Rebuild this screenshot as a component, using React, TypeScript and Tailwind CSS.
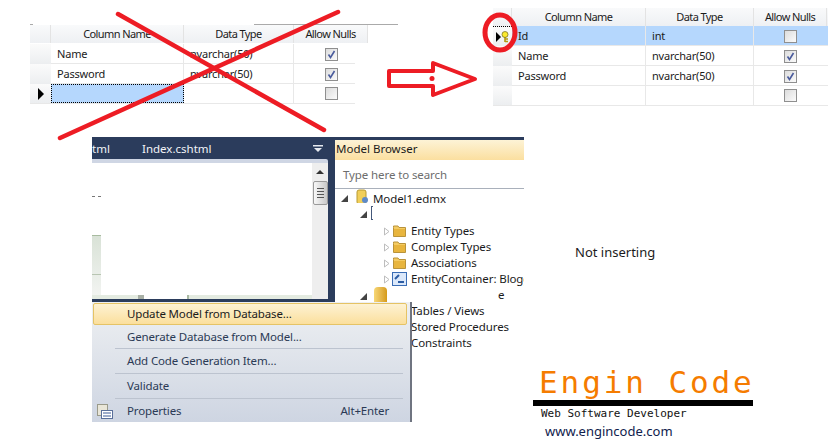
const tableFont = { fontFamily: '"Noto Sans", sans-serif' };

function Check({ on }: { on: boolean }) {
  return (
    <span className="flex h-[13px] w-[13px] items-center justify-center border border-[#8f8f8f] bg-gradient-to-br from-[#dcdcdc] to-[#fbfbfb]">
      {on && (
        <svg width="9" height="9" viewBox="0 0 9 9">
          <path d="M1.5 4.5 L3.5 7.5 L7.5 1" fill="none" stroke="#4a5b9c" strokeWidth="1.6" />
        </svg>
      )}
    </span>
  );
}

function Header({ cols }: { cols: string }) {
  return (
    <div className={`grid h-[18px] ${cols} bg-gradient-to-b from-[#f9fafb] to-[#eef0f3] text-center text-[11px] leading-[17px] tracking-[-0.6px] text-[#1b1b1b]`}>
      <div className="border-r border-[#e3e3e3]" />
      <div className="border-r border-[#e3e3e3]">Column Name</div>
      <div className="border-r border-[#e3e3e3]">Data Type</div>
      <div className="border-r border-[#e3e3e3]">Allow Nulls</div>
    </div>
  );
}

function Row({ cols, name, type, on, marker, selected, focusName }: { cols: string; name: string; type: string; on: boolean; marker?: React.ReactNode; selected?: boolean; focusName?: boolean }) {
  return (
    <div className={`grid h-5 ${cols} border-b border-[#e8e8e8] text-[11px] leading-[20px] tracking-[-0.2px] text-[#1b1b1b] ${selected ? 'bg-[#b5d7fd]' : ''}`}>
      <div className={`flex items-center justify-center bg-gradient-to-b from-[#fbfbfb] to-[#eceef0] ${selected ? 'border-t border-dotted border-black' : ''}`}>{marker}</div>
      <div className={`border-r border-[#e8e8e8] pl-[6px] ${focusName ? 'border border-dotted border-black bg-[#b5d7fd]' : ''}`}>{name}</div>
      <div className="border-r border-[#e8e8e8] pl-[6px]">{type}</div>
      <div className="flex items-center justify-center"><Check on={on} /></div>
    </div>
  );
}

function Folder({ label }: { label: string }) {
  return (
    <div className="flex h-4 items-center">
      <svg width="8" height="9" viewBox="0 0 8 9" className="mr-[2px] shrink-0"><path d="M1.5 1 L6 4.5 L1.5 8 Z" fill="#fff" stroke="#bdbdbd" /></svg>
      <svg width="13" height="12" viewBox="0 0 13 12" className="mr-[5px] shrink-0">
        <path d="M.5 2.5 V1 H5 L6 2.5 H12.5 V11.5 H.5 Z" fill="#f4cb62" stroke="#b9933b" />
        <rect x="1" y="4" width="11" height="7" fill="#e8b53e" />
      </svg>
      <span>{label}</span>
    </div>
  );
}

function MenuItem({ label, shortcut, icon, first, tall }: { label: string; shortcut?: string; icon?: React.ReactNode; first?: boolean; tall?: boolean }) {
  return (
    <div className={`flex items-center text-[11.5px] tracking-[-0.15px] ${first ? 'h-[22px] rounded-[2px] border border-[#e5c365] bg-gradient-to-b from-[#fdf2d3] to-[#fbdf9c] text-[#1b1b1b]' : tall ? 'h-[24px] text-[#2b3a55]' : 'h-[23px] text-[#2b3a55]'}`}>
      <div className={`flex ${first ? 'w-[33px]' : 'w-[34px]'} shrink-0 items-center pl-[4px]`}>{icon}</div>
      <span className="flex-1">{label}</span>
      {shortcut && <span className="mr-[18px]">{shortcut}</span>}
    </div>
  );
}

function Sep() {
  return <div className="ml-[22px] mr-[4px] h-px bg-[#bcc3cf]" />;
}

export default function App() {
  const c1 = 'grid-cols-[21px_133px_110px_74px]';
  const c2 = 'grid-cols-[19px_134px_108px_73px]';
  return (
    <div className="relative h-[447px] w-[832px] overflow-hidden bg-white" style={tableFont}>
      {/* struck-out table */}
      <div className="absolute left-[30px] top-[24px] h-px w-[3px] bg-[#aaa]" />
      <div className="absolute left-[254px] top-[24px] h-px w-[144px] bg-[#aaa]" />
      <div className="absolute left-[30px] top-[25px] w-[338px]">
        <Header cols={c1} />
        <div className="w-[325px] overflow-hidden pt-px">
          <Row cols={c1} name="Name" type="nvarchar(50)" on />
          <Row cols={c1} name="Password" type="nvarchar(50)" on />
          <Row cols={c1} name="" type="" on={false} focusName marker={<span className="h-0 w-0 border-y-[6px] border-l-[6px] border-y-transparent border-l-black" />} />
        </div>
      </div>

      {/* fixed table */}
      <div className="absolute left-[493px] top-[8px] w-[335px]">
        <Header cols={c2} />
        <div>
          <Row cols={c2} name="Id" type="int" on={false} selected marker={
            <span className="flex items-center">
              <span className="h-0 w-0 border-y-[5px] border-l-[5px] border-y-transparent border-l-black" />
              <svg width="8" height="12" viewBox="0 0 8 12"><path d="M4 5 V11 M4 8 H7 M4 10.5 H7" stroke="#b59a10" strokeWidth="1.6" /><circle cx="4" cy="3.5" r="3" fill="#fbe92e" stroke="#6b6420" strokeWidth=".7" /></svg>
            </span>
          } />
          <Row cols={c2} name="Name" type="nvarchar(50)" on />
          <Row cols={c2} name="Password" type="nvarchar(50)" on />
          <Row cols={c2} name="" type="" on={false} />
        </div>
      </div>

      {/* Visual Studio collage */}
      <div className="absolute left-[92px] top-[137px] h-[165px] w-[243px] bg-[#2b3c5c]">
        <div className="relative flex h-[22px] items-center pt-[2px] text-[11.5px] text-[#f2f4f8]">
          <span className="w-[50px]">tml</span>
          <span>Index.cshtml</span>
          <svg width="10" height="8" viewBox="0 0 10 8" className="absolute left-[221px] top-[8px]"><path d="M0 0 H10 V1.5 H0 Z M1 3 H9 L5 7 Z" fill="#e6e9ef" /></svg>
        </div>
        <div className="flex h-[140px] w-[236px] flex-col rounded-tr-[2px] border-t-[4px] border-[#cfd6e4] bg-white">
          <div className="flex flex-1">
            <div className="relative flex-1">
              <div className="absolute left-0 top-[33px] h-px w-[9px] border-t border-dashed border-[#777]" />
              <div className="absolute left-0 top-[72px] h-[60px] w-[9px] border-t border-[#a8bba0] bg-gradient-to-b from-[#d9e2d7] to-[#f2f4f1]" />
              <div className="absolute left-0 top-[111px] h-px w-[9px] bg-[#b8c5b2]" />
              <div className="absolute bottom-0 left-0 flex h-[4px] w-full bg-[#e4ebe1]">
                <div className="ml-[46px] w-[6px] bg-[#a9b0a6]" />
                <div className="w-[43px] bg-white" />
                <div className="w-[2px] bg-[#a9b9a3]" />
              </div>
            </div>
            <div className="flex w-[16px] flex-col items-center bg-[#eeeeee]">
              <span className="mt-[7px] h-0 w-0 border-x-[4px] border-b-[4px] border-x-transparent border-b-[#333]" />
              <div className="mt-[7px] flex h-[24px] w-[15px] flex-col items-center justify-center gap-[2px] rounded-[2px] border border-[#9a9a9a] bg-gradient-to-r from-[#f8f8f8] to-[#c9c9c9]">
                <span className="h-px w-[7px] bg-[#555]" />
                <span className="h-px w-[7px] bg-[#555]" />
                <span className="h-px w-[7px] bg-[#555]" />
                <span className="h-px w-[7px] bg-[#555]" />
              </div>
            </div>
          </div>
        </div>
      </div>

      {/* Model Browser */}
      <div className="absolute left-[335px] top-[137px] h-[165px] w-[189px] bg-[#2b3c5c] pt-[3px]">
        <div className="flex h-[20px] items-center bg-gradient-to-b from-[#fdf3d6] to-[#fbdf9f] pb-[2px] pl-[1px] text-[11.5px] text-[#1b1b1b]">Model Browser</div>
      </div>
      <div className="absolute left-[335px] top-[160px] h-[290px] w-[189px] overflow-hidden whitespace-nowrap bg-white text-[11.5px] tracking-[-0.1px] text-[#1b1b1b]">
        <div className="flex h-[29px] items-center border-b border-[#a9b0bb] pl-[8px] pt-[2px] text-[#6d6d6d]">Type here to search</div>
        <div className="flex h-[14px] items-start overflow-hidden pl-[6px]">
          <span className="mt-[6px] h-0 w-0 border-b-[7px] border-l-[7px] border-b-[#444] border-l-transparent" />
          <svg width="16" height="16" viewBox="0 0 16 16" className="ml-[5px] shrink-0">
            <rect x="4" y="1" width="9" height="14" rx="2" fill="#f1cf5a" stroke="#b89a32" />
            <circle cx="12" cy="11" r="3" fill="#5d8ac8" />
          </svg>
          <span className="ml-[4px] mt-[2px] leading-[16px]">Model1.edmx</span>
        </div>
        <div className="flex h-[19px] items-center pl-[25px]">
          <span className="mt-[4px] h-0 w-0 border-b-[7px] border-l-[7px] border-b-[#444] border-l-transparent" />
          <span className="ml-[4px] h-[14px] w-[2px] border-y border-l border-[#44587a]" />
        </div>
        <div className="pl-[48px] pt-[1px]">
          <Folder label="Entity Types" />
          <Folder label="Complex Types" />
          <Folder label="Associations" />
          <div className="flex h-4 items-center">
            <svg width="8" height="9" viewBox="0 0 8 9" className="mr-[1px] shrink-0"><path d="M1.5 1 L6 4.5 L1.5 8 Z" fill="#fff" stroke="#bdbdbd" /></svg>
            <svg width="15" height="14" viewBox="0 0 15 14" className="mr-[4px] shrink-0"><rect x=".5" y=".5" width="14" height="13" fill="#dbe8fa" stroke="#3a6db5" /><path d="M3 7 L7 3 M6 10 H12" stroke="#2c5ca3" strokeWidth="2" /></svg>
            <span>EntityContainer: Blogger</span>
          </div>
        </div>
        <div className="flex h-[16px] items-start pl-[25px]">
          <span className="mt-[6px] h-0 w-0 border-b-[7px] border-l-[7px] border-b-[#444] border-l-transparent" />
          <span className="ml-[7px] h-[16px] w-[13px] rounded-t-[4px] bg-gradient-to-r from-[#f7d774] to-[#d59b14]" />
          <span className="ml-[111px] leading-[16px]">e</span>
        </div>
        <div className="pl-[76px] leading-[16px]">
          <div>Tables / Views</div>
          <div>Stored Procedures</div>
          <div>Constraints</div>
        </div>
      </div>

      {/* Context menu */}
      <div className="absolute left-[92px] top-[302px] h-[120px] w-[320px] border-r-[2px] border-[#6f7480] bg-gradient-to-b from-[#eef0f2] to-[#ced5e2] pl-px pr-[3px] pt-px">
        <MenuItem first label="Update Model from Database..." />
        <MenuItem label="Generate Database from Model..." />
        <Sep />
        <MenuItem tall label="Add Code Generation Item..." />
        <Sep />
        <MenuItem tall label="Validate" />
        <Sep />
        <MenuItem tall label="Properties" shortcut="Alt+Enter" icon={
          <svg width="16" height="15" viewBox="0 0 16 15">
            <rect x=".5" y=".5" width="10" height="11" fill="#e9e6d8" stroke="#9a9a8a" />
            <rect x="4.5" y="6.5" width="11" height="8" fill="#fff" stroke="#5a6f9a" />
            <path d="M6 9 H14 M6 12 H14" stroke="#3d5a96" />
          </svg>
        } />
      </div>

      <div className="absolute left-[575px] top-[243px] text-[13px] leading-[18px] text-[#1b1b1b]">Not inserting</div>

      {/* Logo */}
      <div className="absolute left-[533px] top-[364px] w-[220px]">
        <div className="h-[36px] whitespace-nowrap pl-[6px] text-[31px] leading-[36px] tracking-[2.9px] text-[#f57c00]" style={{ fontFamily: '"DejaVu Sans Mono", monospace' }}>Engin Code</div>
        <div className="h-[6px] bg-black" />
        <div className="pl-[8px] pt-px text-[11px] leading-[14px] text-[#111]" style={{ fontFamily: '"DejaVu Sans Mono", monospace' }}>Web Software Developer</div>
        <div className="pl-[12px] pt-[1px] text-[13px] leading-[18px] text-[#10214d]">www.engincode.com</div>
      </div>

      {/* red annotations */}
      <svg className="absolute left-0 top-0" width="832" height="447" viewBox="0 0 832 447" fill="none">
        <path d="M118 14 L324 130" stroke="#ed1c24" strokeWidth="4.5" strokeLinecap="round" />
        <path d="M338 12 L60 138" stroke="#ed1c24" strokeWidth="4.5" strokeLinecap="round" />
        <path d="M389 71 H433 V63 L475 79 L433 95 V86 H389 Z" stroke="#ed1c24" strokeWidth="4" strokeLinejoin="round" />
        <circle cx="432" cy="78.5" r="2.5" fill="#ed1c24" />
        <ellipse cx="500" cy="32.5" rx="15" ry="17.5" stroke="#ed1c24" strokeWidth="5" />
      </svg>
    </div>
  );
}
